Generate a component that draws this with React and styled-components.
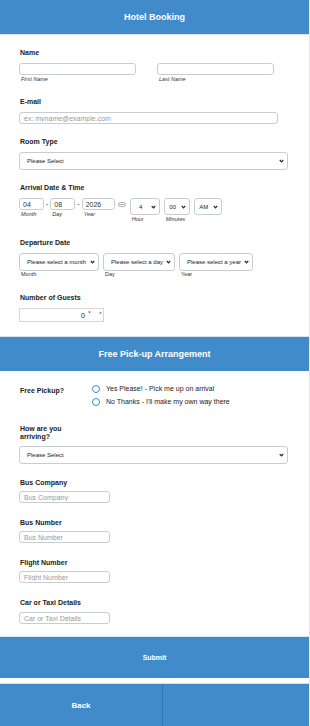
import React from "react";
import styled, { createGlobalStyle } from "styled-components";

const GlobalStyle = createGlobalStyle`
  html, body { margin: 0; padding: 0; background: #fff; }
  body { font-family: "Liberation Sans", Arial, sans-serif; }
  *, *::before, *::after { box-sizing: border-box; }
`;

const BLUE = "#428bca";
const FONT = `"Liberation Sans", Arial, sans-serif`;

const Page = styled.div`
  width: 310px;
  border-right: 1px solid #e2e8ee;
  font-family: ${FONT};
  color: #1d1d1d;
`;

const BandHeader = styled.div`
  height: ${(p) => (p.$top ? 35 : 35)}px;
  background: ${BLUE};
  color: #fff;
  font-size: 9px;
  font-weight: 700;
  display: flex;
  align-items: center;
  justify-content: center;
  ${(p) => (p.$top ? "border-bottom: 1px solid #dde5ec;" : "border-top: 1px solid #dde5ec;")}
`;

const Section = styled.div`
  padding: ${(p) => p.$pt}px 0 ${(p) => p.$pb}px 19px;
  display: flex;
  flex-direction: column;
  align-items: flex-start;
`;

const Field = styled.div`
  margin-top: ${(p) => p.$mt || 0}px;
  display: flex;
  flex-direction: column;
  align-items: flex-start;
`;

const Label = styled.div`
  font-size: 7px;
  font-weight: 700;
  line-height: 8px;
  color: #1b1b1b;
  padding-left: 1px;
  margin-bottom: ${(p) => (p.$mb ?? 6)}px;
  ${(p) => (p.$w ? `width: ${p.$w}px;` : "")}
`;

const SubLabel = styled.div`
  font-size: 5.5px;
  line-height: 7px;
  color: #333;
  font-style: ${(p) => (p.$italic ? "italic" : "normal")};
  padding-left: 2px;
  margin-top: ${(p) => (p.$mt ?? 1)}px;
  white-space: nowrap;
`;

const TextInput = styled.input`
  display: block;
  width: ${(p) => p.$w}px;
  height: ${(p) => p.$h || 12}px;
  margin: 0;
  border: 1px solid #c9cdd1;
  border-radius: 3px;
  padding: 0 ${(p) => p.$px ?? 4}px;
  font: 7px ${FONT};
  color: #333;
  background: #fff;
  outline: none;
  &::placeholder { color: #9a9a9a; }
`;

const SelectBox = styled.div`
  display: flex;
  align-items: center;
  width: ${(p) => p.$w}px;
  height: ${(p) => p.$h || 17}px;
  border: 1px solid #c9cdd1;
  border-radius: 3px;
  padding: 0 ${(p) => p.$pr ?? 3}px 0 ${(p) => p.$pl ?? 7}px;
  font-size: 6px;
  color: #222;
  background: #fff;
`;

const SelectText = styled.span`
  flex: 1;
  min-width: 0;
  overflow: hidden;
  white-space: nowrap;
  text-align: ${(p) => (p.$center ? "center" : "left")};
`;

const ChevronSvg = styled.svg`
  flex-shrink: 0;
  margin-left: 2px;
`;

const Chevron = () => (
  <ChevronSvg width="5" height="4" viewBox="0 0 5 4">
    <polyline points="0.8,1 2.5,2.8 4.2,1" fill="none" stroke="#2a2a2a" strokeWidth="1.2" />
  </ChevronSvg>
);

const Select = ({ children, center, ...rest }) => (
  <SelectBox {...rest}>
    <SelectText $center={center}>{children}</SelectText>
    <Chevron />
  </SelectBox>
);

const NameGrid = styled.div`
  display: grid;
  grid-template-columns: 138px 138px;
`;

const Col = styled.div`
  display: flex;
  flex-direction: column;
  align-items: flex-start;
`;

const DateRow = styled.div`
  display: flex;
  align-items: flex-start;
  gap: ${(p) => p.$gap ?? 2}px;
`;

const Dash = styled.span`
  font-size: 7px;
  line-height: 12px;
  height: 12px;
  color: #333;
`;

const IconCell = styled.span`
  display: flex;
  align-items: center;
  height: 12px;
  margin: 0 1px 0 1px;
`;

const TimeGroup = styled.div`
  display: flex;
  align-items: flex-start;
  gap: 4px;
  margin-left: 1px;
`;

const NumberBox = styled.div`
  width: 85px;
  height: 14px;
  border: 1px solid #d6d6d6;
  display: flex;
  justify-content: flex-end;
  align-items: center;
  font-size: 7px;
  color: #222;
  background: #fff;
`;

const Spinner = styled.div`
  display: flex;
  gap: 8px;
  align-self: flex-start;
  margin: 2px 1px 0 3px;
`;

const PickupRow = styled.div`
  display: flex;
  align-items: flex-start;
`;

const RadioGroup = styled.div`
  display: flex;
  flex-direction: column;
  gap: 1px;
`;

const RadioRow = styled.label`
  display: flex;
  align-items: center;
  gap: 6px;
  height: 12px;
  font-size: 7px;
  line-height: 12px;
  color: #222;
`;

const RadioCircle = styled.span`
  width: 8px;
  height: 8px;
  border: 1px solid #3b89d3;
  border-radius: 50%;
  background: #fff;
  flex-shrink: 0;
`;

const SubmitBar = styled.div`
  height: 42px;
  border-top: 1px solid #dfe6ec;
  background: ${BLUE};
  color: #fff;
  font-size: 7px;
  font-weight: 700;
  display: flex;
  align-items: center;
  justify-content: center;
`;

const BackBar = styled.div`
  margin-top: 5px;
  height: 43px;
  border-top: 1px solid #d5dfe8;
  background: ${BLUE};
  display: grid;
  grid-template-columns: 163px 1fr;
`;

const BackCell = styled.div`
  display: flex;
  align-items: center;
  justify-content: center;
  color: #fff;
  font-size: 8px;
  font-weight: 700;
  ${(p) => (p.$divider ? "border-right: 1px solid #3576af;" : "")}
`;

const CalendarIcon = () => (
  <svg width="8" height="5" viewBox="0 0 8 5">
    <rect x="0.5" y="0.5" width="7" height="4" rx="1.8" fill="none" stroke="#9a9a9a" strokeWidth="0.8" />
    <line x1="1.6" y1="2.5" x2="6.4" y2="2.5" stroke="#9a9a9a" strokeWidth="0.8" />
  </svg>
);

const Tri = ({ up }) => (
  <svg width="3" height="3" viewBox="0 0 3 3">
    <polygon points={up ? "0,2.5 1.5,0.5 3,2.5" : "0,0.5 1.5,2.5 3,0.5"} fill="#777" />
  </svg>
);

export default function App() {
  return (
    <>
      <GlobalStyle />
      <Page>
        <BandHeader $top>Hotel Booking</BandHeader>
        <Section $pt={14} $pb={14}>
          <Field>
            <Label>Name</Label>
            <NameGrid>
              <Col>
                <TextInput $w={117} />
                <SubLabel $italic>First Name</SubLabel>
              </Col>
              <Col>
                <TextInput $w={117} />
                <SubLabel $italic>Last Name</SubLabel>
              </Col>
            </NameGrid>
          </Field>

          <Field $mt={15}>
            <Label>E-mail</Label>
            <TextInput $w={259} placeholder="ex: myname@example.com" />
          </Field>

          <Field $mt={14}>
            <Label>Room Type</Label>
            <Select $w={269} $h={18}>Please Select</Select>
          </Field>

          <Field $mt={14}>
            <Label>Arrival Date &amp; Time</Label>
            <DateRow>
              <Col>
                <TextInput $w={25} $px={3} defaultValue="04" />
                <SubLabel $italic>Month</SubLabel>
              </Col>
              <Dash>-</Dash>
              <Col>
                <TextInput $w={25} $px={3} defaultValue="08" />
                <SubLabel $italic>Day</SubLabel>
              </Col>
              <Dash>-</Dash>
              <Col>
                <TextInput $w={33} $px={3} defaultValue="2026" />
                <SubLabel $italic>Year</SubLabel>
              </Col>
              <IconCell>
                <CalendarIcon />
              </IconCell>
              <TimeGroup>
                <Col>
                  <Select $w={30} $pl={2} center>4</Select>
                  <SubLabel $italic>Hour</SubLabel>
                </Col>
                <Col>
                  <Select $w={26} $pl={2} center>00</Select>
                  <SubLabel $italic>Minutes</SubLabel>
                </Col>
                <Col>
                  <Select $w={28} $pl={2} center>AM</Select>
                </Col>
              </TimeGroup>
            </DateRow>
          </Field>

          <Field $mt={16}>
            <Label>Departure Date</Label>
            <DateRow $gap={4}>
              <Col>
                <Select $w={80} $h={18}>Please select a month</Select>
                <SubLabel $mt={0}>Month</SubLabel>
              </Col>
              <Col>
                <Select $w={72} $h={18}>Please select a day</Select>
                <SubLabel $mt={0}>Day</SubLabel>
              </Col>
              <Col>
                <Select $w={74} $h={18}>Please select a year</Select>
                <SubLabel $mt={0}>Year</SubLabel>
              </Col>
            </DateRow>
          </Field>

          <Field $mt={16}>
            <Label>Number of Guests</Label>
            <NumberBox>
              <span>0</span>
              <Spinner>
                <Tri />
                <Tri up />
              </Spinner>
            </NumberBox>
          </Field>
        </Section>

        <BandHeader>Free Pick-up Arrangement</BandHeader>
        <Section $pt={12} $pb={12}>
          <PickupRow>
            <Label $w={73} $mb={0} style={{ paddingTop: 4 }}>Free Pickup?</Label>
            <RadioGroup>
              <RadioRow>
                <RadioCircle />
                Yes Please! - Pick me up on arrival
              </RadioRow>
              <RadioRow>
                <RadioCircle />
                No Thanks - I'll make my own way there
              </RadioRow>
            </RadioGroup>
          </PickupRow>

          <Field $mt={17}>
            <Label $w={68} $mb={5}>How are you arriving?</Label>
            <Select $w={269} $h={18}>Please Select</Select>
          </Field>

          <Field $mt={15}>
            <Label $mb={4}>Bus Company</Label>
            <TextInput $w={91} placeholder="Bus Company" />
          </Field>

          <Field $mt={16}>
            <Label $mb={4}>Bus Number</Label>
            <TextInput $w={91} placeholder="Bus Number" />
          </Field>

          <Field $mt={16}>
            <Label $mb={4}>Flight Number</Label>
            <TextInput $w={91} placeholder="Flight Number" />
          </Field>

          <Field $mt={16}>
            <Label $mb={5}>Car or Taxi Details</Label>
            <TextInput $w={91} placeholder="Car or Taxi Details" />
          </Field>
        </Section>

        <SubmitBar>Submit</SubmitBar>
        <BackBar>
          <BackCell $divider>Back</BackCell>
          <BackCell />
        </BackBar>
      </Page>
    </>
  );
}
